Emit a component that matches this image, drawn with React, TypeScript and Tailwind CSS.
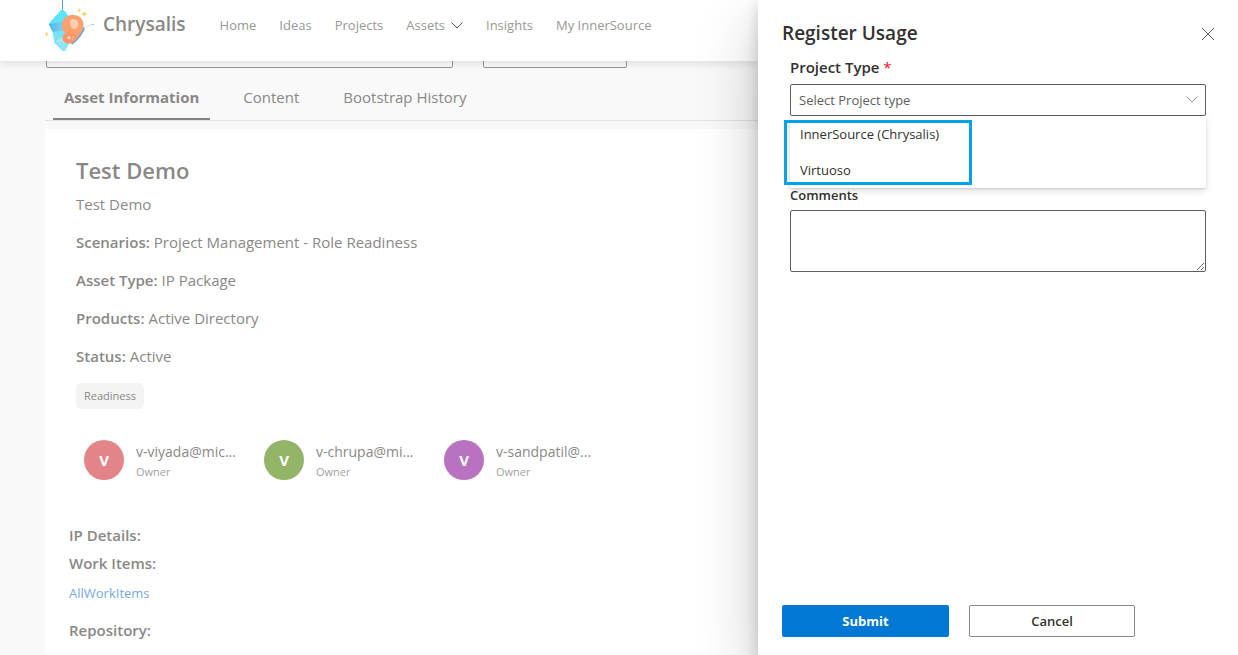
import { useState } from "react";

const navLinks = ["Home", "Ideas", "Projects", "Assets", "Insights", "My InnerSource"];
const tabs = ["Asset Information", "Content", "Bootstrap History"];
const details = [
  { label: "Scenarios:", value: "Project Management - Role Readiness" },
  { label: "Asset Type:", value: "IP Package" },
  { label: "Products:", value: "Active Directory" },
  { label: "Status:", value: "Active" },
];
const owners = [
  { name: "v-viyada@mic...", color: "bg-[#e38488]" },
  { name: "v-chrupa@mi...", color: "bg-[#92b568]" },
  { name: "v-sandpatil@...", color: "bg-[#b872c0]" },
];
const projectTypes = ["InnerSource (Chrysalis)", "Virtuoso"];

function Logo() {
  return (
    <svg viewBox="0 0 180 168" className="h-14 w-15 shrink-0" aria-hidden="true">
      <defs>
        <linearGradient id="shell" x1="0" y1="0" x2="0" y2="1">
          <stop offset="0" stopColor="#55e4ff" />
          <stop offset="1" stopColor="#8edcf2" />
        </linearGradient>
        <linearGradient id="fold" x1="0" y1="0" x2="1" y2="0">
          <stop offset="0" stopColor="#52b4e8" />
          <stop offset="1" stopColor="#7fd3f7" />
        </linearGradient>
      </defs>
      <path d="M67.500 0V28" stroke="#4f9de0" strokeWidth="3" />
      <path d="M67 26L80 40L92 60V120L76 152H67L43 128L40 103L26 72L32 64Z" fill="url(#shell)" />
      <path d="M26 72L74 64L70 92L40 96Z" fill="url(#fold)" />
      <path d="M40 96L72 90L68 112L42 124Z" fill="#76e3f8" />
      <path d="M43 128L80 130L76 152H67Z" fill="#8be6f5" />
      <path d="M42 126L68 110L80 130Z" fill="#a4e7f5" />
      <path d="M132 80Q137 84 130 95Q116 120 96 134L93 129Q118 110 132 80Z" fill="#559cdf" />
      <path d="M132 84Q143 74 157 74" stroke="#b5d5ee" strokeWidth="2" fill="none" />
      <circle cx="159" cy="73" r="2" fill="#4f8fd9" />
      <path d="M98 45C117 43 131 57 131 76C129 96 116 111 105 122C95 133 78 134 71 124C65 115 69 105 77 101C65 94 63 75 69 62C75 50 86 45 98 45Z" fill="#fba16f" />
      <path d="M71 104C82 99 96 99 109 106C104 121 94 131 81 129C69 126 66 112 71 104Z" fill="#f99468" />
      <path d="M97 57C111 55 119 68 113 80C106 91 94 88 91 76C88 66 90 59 97 57Z" fill="#ffcdb0" />
      <circle cx="87" cy="113" r="5" fill="#ffd4bc" />
      <circle cx="99" cy="111" r="2" fill="#ffd4bc" />
      <circle cx="97" cy="118" r="2" fill="#ffd4bc" />
      <path d="M118 24L120 29L125 31L120 33L118 38L116 33L111 31L116 29Z" fill="#ffcf65" />
      <path d="M133 32L136 39L142 42L136 45L133 52L130 45L124 42L130 39Z" fill="#ffcf65" />
      <path d="M20 96L22 100L26 103L22 105L20 110L18 105L14 103L18 100Z" fill="#ffcf65" />
    </svg>
  );
}

function Chevron({ className }: { className: string }) {
  return (
    <svg viewBox="0 0 12 7" className={className} fill="none" stroke="currentColor" aria-hidden="true">
      <path d="M0.500 0.500L6 6L11.500 0.500" />
    </svg>
  );
}

function Header() {
  return (
    <header className="relative z-10 flex h-[61px] shrink-0 items-start bg-white pl-10 shadow-[0_3px_8px_rgba(0,0,0,0.1)]">
      <Logo />
      <span className="ml-[3px] pt-2 text-[19px] leading-8 font-semibold text-[#8a8886]">Chrysalis</span>
      <nav className="ml-[34px] flex gap-[23px] pt-4 text-[13px] leading-[18px] text-[#999795]">
        {navLinks.map((link) => (
          <a key={link} href="#" className="flex items-center gap-1.5 whitespace-nowrap">
            {link}
            {link === "Assets" && <Chevron className="h-[7px] w-3 text-[#555]" />}
          </a>
        ))}
      </nav>
    </header>
  );
}

function AssetPage() {
  const [tab, setTab] = useState(tabs[0]);
  return (
    <main className="flex grow flex-col overflow-hidden pl-[45px] text-[#8a8886]">
      <div className="flex h-[7px] shrink-0 items-end gap-[30px] overflow-hidden pl-px">
        <input aria-label="Search" className="h-8 w-[407px] shrink-0 rounded-xs border border-[#999795] bg-[#fafafa]" />
        <input aria-label="Filter" className="h-8 w-36 shrink-0 rounded-xs border border-[#999795] bg-[#fafafa]" />
      </div>
      <div role="tablist" className="flex h-[53px] shrink-0 items-end gap-[22px] border-b border-[#e1e1e1] pl-2">
        {tabs.map((name) => (
          <button
            key={name}
            role="tab"
            aria-selected={name === tab}
            onClick={() => setTab(name)}
            className={
              name === tab
                ? "h-[45px] border-b-2 border-[#858381] px-[11px] pt-0.5 text-[15px] font-bold whitespace-nowrap"
                : "h-[45px] border-b-2 border-transparent px-[11px] pt-0.5 text-[15px] whitespace-nowrap"
            }
          >
            {name}
          </button>
        ))}
      </div>
      <section className="mt-2 grow bg-white pt-6 pl-6 text-[15px] leading-[38px]">
        <div className="pl-[7px]">
          <h1 className="text-[22px] leading-[34px] font-semibold">Test Demo</h1>
          <p className="mb-0.5 leading-[34px]">Test Demo</p>
          <dl>
            {details.map((d) => (
              <div key={d.label} className="flex gap-1 whitespace-nowrap">
                <dt className="font-semibold">{d.label}</dt>
                <dd>{d.value}</dd>
              </div>
            ))}
          </dl>
          <span className="mt-2 flex h-[26px] w-fit items-center rounded-[5px] bg-[#f4f4f4] px-2 text-[11px]">Readiness</span>
        </div>
        <ul className="mt-[29px] flex pl-[15px]">
          {owners.map((o) => (
            <li key={o.name} className="flex w-[180px] shrink-0 items-center gap-3">
              <span className={`flex size-10 shrink-0 items-center justify-center rounded-full text-[15px] font-bold text-white ${o.color}`}>V</span>
              <span className="flex flex-col pt-1 leading-5 whitespace-nowrap">
                <span className="text-sm leading-5">{o.name}</span>
                <span className="text-[11px] leading-5 text-[#a19f9d]">Owner</span>
              </span>
            </li>
          ))}
        </ul>
        <div className="mt-[39px] leading-7">
          <h2 className="font-semibold">IP Details:</h2>
          <h2 className="font-semibold">Work Items:</h2>
          <a href="#" className="block w-fit text-[13px] leading-8 text-[#78a8e0]">AllWorkItems</a>
          <h2 className="mt-[7px] font-semibold">Repository:</h2>
        </div>
      </section>
    </main>
  );
}

function RegisterPanel() {
  const [type, setType] = useState("");
  return (
    <aside className="relative z-20 flex w-[480px] shrink-0 flex-col bg-white px-6 text-[#323130] shadow-[0_26px_58px_rgba(0,0,0,0.22),0_5px_14px_rgba(0,0,0,0.18)]">
      <div className="-mr-3 flex items-center justify-between pt-4">
        <h2 className="pb-0.5 text-[19px] leading-[34px] font-semibold">Register Usage</h2>
        <button aria-label="Close" className="flex size-9 items-center justify-center">
          <svg viewBox="0 0 12 12" className="size-3" stroke="#605e5c" aria-hidden="true">
            <path d="M0 0L12 12M12 0L0 12" />
          </svg>
        </button>
      </div>
      <form className="flex grow flex-col px-2">
        <label htmlFor="project-type" className="pb-0.5 text-[15px] leading-[30px] font-semibold">
          Project Type <span className="font-normal text-[#e81123]">*</span>
        </label>
        <div className="relative">
          <select
            id="project-type"
            value={type}
            onChange={(e) => setType(e.target.value)}
            className="block h-8 w-full appearance-none rounded-xs border border-[#605e5c] bg-white px-2 pt-0.5 text-[13px] text-[#605e5c]"
          >
            <option value="">Select Project type</option>
            {projectTypes.map((t) => (
              <option key={t}>{t}</option>
            ))}
          </select>
          <Chevron className="pointer-events-none absolute top-3 right-2 h-[7px] w-3 text-[#979593]" />
          <div
            role="listbox"
            aria-label="Project Type"
            className="absolute inset-x-0 top-full z-10 flex flex-col rounded-b-xs bg-white shadow-[0_3px_7px_rgba(0,0,0,0.13),0_1px_2px_rgba(0,0,0,0.11)]"
          >
            {projectTypes.map((t) => (
              <button key={t} type="button" role="option" aria-selected={t === type} onClick={() => setType(t)} className="h-9 px-2.5 pt-0.5 text-left text-[13px]">
                {t}
              </button>
            ))}
            <div className="pointer-events-none absolute top-1 -left-1.5 h-[65px] w-[188px] border-3 border-[#00a2e8]" />
          </div>
        </div>
        <label htmlFor="comments" className="mt-[66px] pb-0.5 text-[13px] leading-[26px] font-semibold">
          Comments
        </label>
        <textarea id="comments" className="h-[62px] rounded-xs border border-[#605e5c] px-2 py-1 text-sm" />
      </form>
      <div className="flex gap-5 pb-[18px] text-[13px] font-semibold">
        <button className="h-8 w-[167px] rounded-xs bg-[#0078d4] pt-0.5 font-bold text-white">Submit</button>
        <button className="h-8 w-[166px] rounded-xs border border-[#8a8886] bg-white pt-0.5">Cancel</button>
      </div>
    </aside>
  );
}

export default function App() {
  return (
    <div className="flex h-screen overflow-hidden bg-[#f9f9f9] font-['Open_Sans','Noto_Sans',sans-serif]">
      <div className="flex min-w-0 flex-1 flex-col">
        <Header />
        <AssetPage />
      </div>
      <RegisterPanel />
    </div>
  );
}
